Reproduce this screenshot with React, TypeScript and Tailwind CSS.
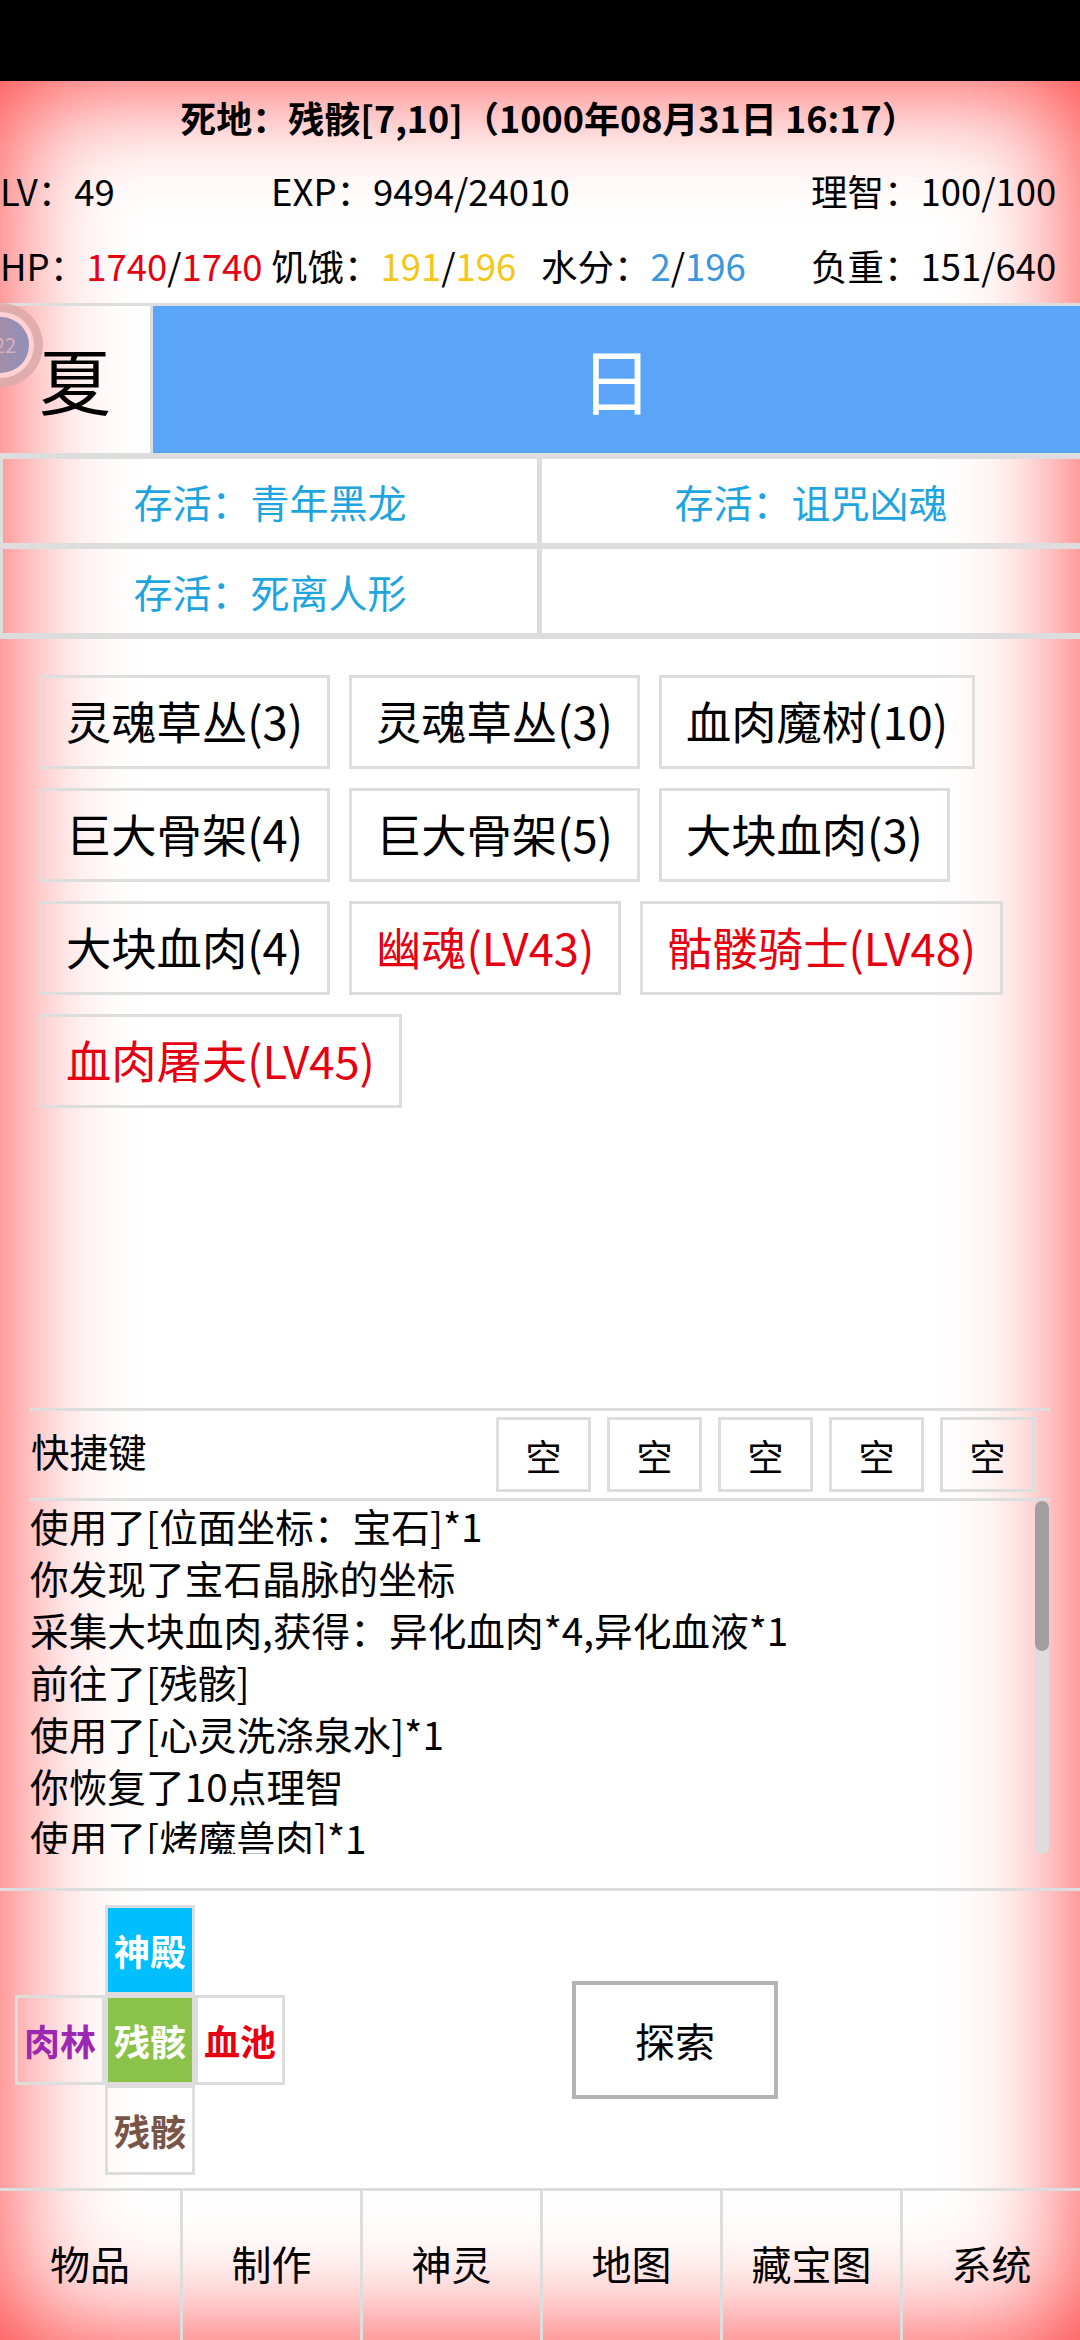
import React from 'react';

const FONT = "font-['Noto_Sans_CJK_SC','Noto_Sans',sans-serif]";

const entities = [
  { name: '灵魂草丛(3)' },
  { name: '灵魂草丛(3)' },
  { name: '血肉魔树(10)' },
  { name: '巨大骨架(4)' },
  { name: '巨大骨架(5)' },
  { name: '大块血肉(3)' },
  { name: '大块血肉(4)' },
  { name: '幽魂(LV43)', hostile: true },
  { name: '骷髅骑士(LV48)', hostile: true },
  { name: '血肉屠夫(LV45)', hostile: true },
];

const logLines = [
  '使用了[位面坐标：宝石]*1',
  '你发现了宝石晶脉的坐标',
  '采集大块血肉,获得：异化血肉*4,异化血液*1',
  '前往了[残骸]',
  '使用了[心灵洗涤泉水]*1',
  '你恢复了10点理智',
  '使用了[烤魔兽肉]*1',
];

const tabs = ['物品', '制作', '神灵', '地图', '藏宝图', '系统'];

function MapCell({ label, className }: { label: string; className: string }) {
  return (
    <div className={`w-[90px] h-[90px] border-[3px] border-[#dddddd] flex items-center justify-center text-[36px] font-bold ${className}`}>
      {label}
    </div>
  );
}

export default function App() {
  return (
    <div className={`${FONT} w-[1080px] h-[2340px] flex flex-col bg-white text-black overflow-hidden`}>
      <div className="h-[81px] bg-black shrink-0" />

      <main className="relative flex-1 flex flex-col shadow-[inset_0_0_120px_rgba(255,0,0,0.8)]">
        {/* status header */}
        <div className="h-[74px] flex items-center justify-center pl-[18px] pb-[2px] text-[36px] font-bold whitespace-pre">
          死地：残骸[7,10]（1000年08月31日 16:17）
        </div>
        <div className="grid grid-cols-4 h-[75px] items-center pb-[2px] text-[36.5px] whitespace-nowrap">
          <div>LV：49</div>
          <div className="col-span-2 pl-[1px]">EXP：9494/24010</div>
          <div className="pl-[1px]">理智：100/100</div>
        </div>
        <div className="grid grid-cols-4 h-[73px] items-center text-[36.5px] whitespace-nowrap">
          <div>
            HP：<span className="text-[#e60012]">1740</span>/<span className="text-[#e60012]">1740</span>
          </div>
          <div className="pl-[1px]">
            饥饿：<span className="text-[#f5c518]">191</span>/<span className="text-[#f5c518]">196</span>
          </div>
          <div className="pl-[1px]">
            水分：<span className="text-[#3a96dd]">2</span>/<span className="text-[#3a96dd]">196</span>
          </div>
          <div className="pl-[1px]">负重：151/640</div>
        </div>

        {/* season and time of day */}
        <div className="flex h-[150px] border-t-[3px] border-[#dddddd]">
          <div className="w-[153px] flex items-center justify-center pb-[4px] text-[72px] border-r-[3px] border-[#dddddd]">夏</div>
          <div className="flex-1 bg-[#5aa5f8] flex items-center justify-center pb-[4px] text-[72px] text-white">日</div>
        </div>

        {/* survival goals */}
        <div className="border-y-[6px] border-[#dddddd] text-[39px] text-[#1ea5df]">
          <div className="flex h-[84px]">
            <div className="w-[542px] border-x-[3px] border-r-[5px] border-[#dddddd] flex items-center justify-center">存活：青年黑龙</div>
            <div className="flex-1 flex items-center justify-center">存活：诅咒凶魂</div>
          </div>
          <div className="h-[6px] bg-[#dddddd]" />
          <div className="flex h-[84px]">
            <div className="w-[542px] border-x-[3px] border-r-[5px] border-[#dddddd] flex items-center justify-center">存活：死离人形</div>
            <div className="flex-1" />
          </div>
        </div>

        {/* nearby objects */}
        <div className="h-[769px] px-[39px] pt-[36px] flex flex-wrap content-start gap-[19px] text-[45.3px]">
          {entities.map((entity, index) => (
            <div
              key={index}
              className={`h-[94px] px-[24px] pb-[3px] border-[3px] border-[#dddddd] flex items-center whitespace-nowrap ${entity.hostile ? 'text-[#e60012]' : ''}`}
            >
              {entity.name}
            </div>
          ))}
        </div>

        {/* shortcuts */}
        <div className="mx-[30px] border-y-[3px] border-[#dddddd] h-[93px] flex items-center justify-between pl-[1px] pr-[15px]">
          <span className="text-[38.5px] pb-[8px]">快捷键</span>
          <div className="flex gap-[16px]">
            {[0, 1, 2, 3, 4].map((slot) => (
              <div key={slot} className="w-[95px] h-[75px] border-[3px] border-[#dddddd] flex items-center justify-center text-[36px]">
                空
              </div>
            ))}
          </div>
        </div>

        {/* message log */}
        <div className="relative h-[353px] ml-[30px] mr-[31px] overflow-hidden text-[38.7px] leading-[52px] whitespace-nowrap">
          <div className="-mt-[2px]">
            {logLines.map((line) => (
              <div key={line}>{line}</div>
            ))}
          </div>
          <div className="absolute right-0 top-0 w-[14px] h-full rounded-full bg-[#dddddd]">
            <div className="w-full h-[150px] rounded-full bg-[#a0a0a0]" />
          </div>
        </div>

        <div className="mt-[34px] h-[300px] border-t-[3px] border-[#dddddd] flex">
          {/* compass of neighbouring areas */}
          <div className="w-[285px] pl-[15px] pt-[14px] grid grid-cols-[90px_90px_90px] grid-rows-[90px_90px_90px] shrink-0">
            <div />
            <MapCell label="神殿" className="bg-[#00bfff] text-white" />
            <div />
            <MapCell label="肉林" className="text-[#9c27b0]" />
            <MapCell label="残骸" className="bg-[#8bc34a] text-white" />
            <MapCell label="血池" className="text-[#e60012]" />
            <div />
            <MapCell label="残骸" className="text-[#795548]" />
          </div>
          <div className="flex-1 flex items-start pl-[287px] pt-[90px]">
            <div className="w-[206px] h-[118px] border-[4px] border-[#b4b4b4] flex items-center justify-center text-[40px]">探索</div>
          </div>
        </div>

        {/* bottom menu */}
        <div className="flex-1 border-t-[3px] border-[#dddddd] grid grid-cols-6 text-[40px]">
          {tabs.map((tab, index) => (
            <div key={tab} className={`flex items-center justify-center pb-[6px] ${index > 0 ? 'border-l-[3px] border-[#dddddd]' : ''}`}>
              {tab}
            </div>
          ))}
        </div>

        {/* floating quick-access ball */}
        <div className="absolute left-[-41px] top-[222px] w-[84px] h-[84px] rounded-full bg-[#deabab]/90 flex items-center justify-center">
          <div className="w-[66px] h-[66px] rounded-full bg-[#ffd0d4] flex items-center justify-center">
            <div className="w-[56px] h-[56px] rounded-full bg-gradient-to-r from-[#b08a9c] to-[#9090b8] flex items-center justify-center pl-[8px] text-[20px] text-[#d8b0c0]">
              22
            </div>
          </div>
        </div>
      </main>
    </div>
  );
}
